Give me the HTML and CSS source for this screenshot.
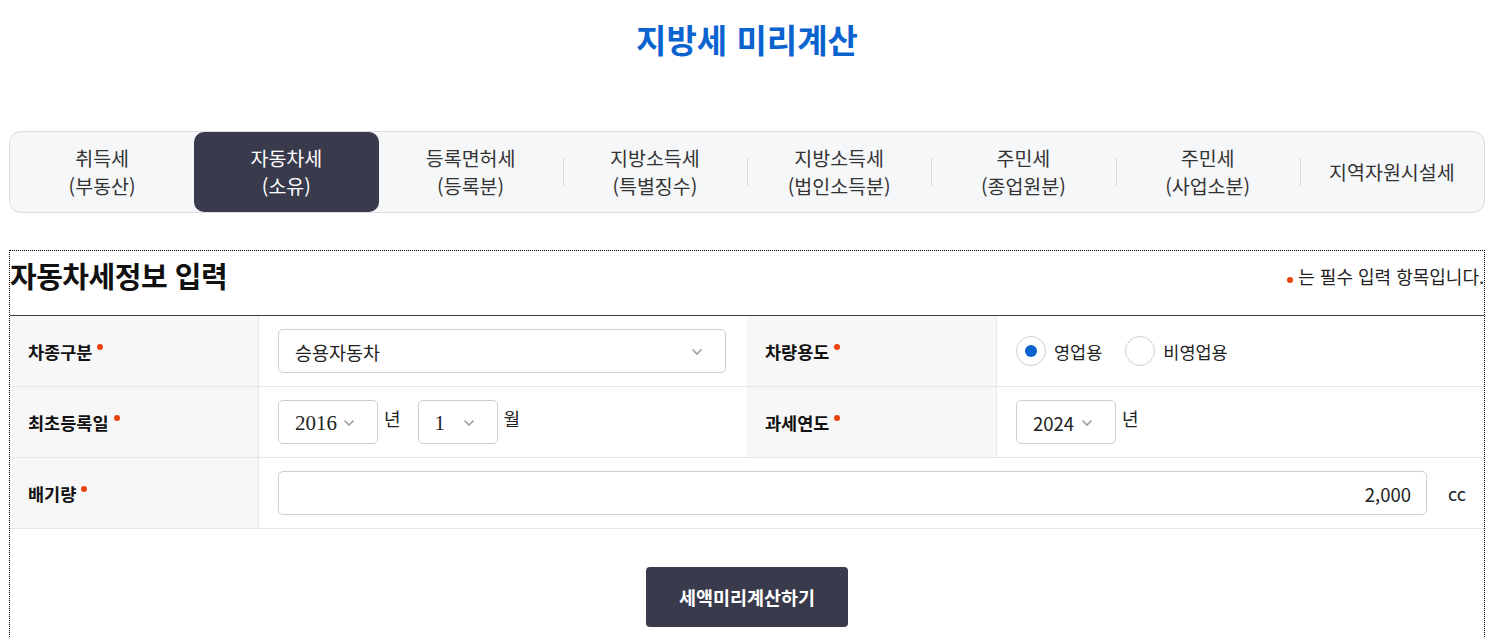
FILE: index.html
```html
<!DOCTYPE html>
<html lang="ko">
<head>
    <meta charset="UTF-8">
    <title>지방세 미리계산</title>
    <link rel="stylesheet" href="styles.css">
</head>
<body>
<div class="wrap">
    <h1 class="page-title">지방세 미리계산</h1>

    <div class="tabs">
        <div class="tab">취득세<br>(부동산)</div>
        <div class="tab active-tab">자동차세<br>(소유)</div>
        <div class="tab">등록면허세<br>(등록분)</div>
        <div class="tab sep">지방소득세<br>(특별징수)</div>
        <div class="tab sep">지방소득세<br>(법인소득분)</div>
        <div class="tab sep">주민세<br>(종업원분)</div>
        <div class="tab sep">주민세<br>(사업소분)</div>
        <div class="tab sep">지역자원시설세</div>
    </div>

    <div class="calc">
        <div class="calc-head">
            <h2>자동차세정보 입력</h2>
            <p class="req-note"><span class="dot"></span>는 필수 입력 항목입니다.</p>
        </div>

        <div class="form-grid">
            <div class="lbl">차종구분<span class="dot"></span></div>
            <div class="val">
                <div class="select wide">승용자동차
                    <svg class="chev" width="12" height="8" viewBox="0 0 12 8"><polyline points="1.5,1.5 6,6 10.5,1.5" fill="none" stroke="#a0a0a0" stroke-width="1.6"/></svg>
                </div>
            </div>
            <div class="lbl">차량용도<span class="dot"></span></div>
            <div class="val">
                <label class="radio"><span class="circle on"></span>영업용</label>
                <label class="radio"><span class="circle"></span>비영업용</label>
            </div>

            <div class="lbl">최초등록일<span class="dot"></span></div>
            <div class="val">
                <div class="select year serif">2016
                    <svg class="chev" width="12" height="8" viewBox="0 0 12 8"><polyline points="1.5,1.5 6,6 10.5,1.5" fill="none" stroke="#a0a0a0" stroke-width="1.6"/></svg>
                </div>
                <span class="unit">년</span>
                <div class="select month serif">1
                    <svg class="chev" width="12" height="8" viewBox="0 0 12 8"><polyline points="1.5,1.5 6,6 10.5,1.5" fill="none" stroke="#a0a0a0" stroke-width="1.6"/></svg>
                </div>
                <span class="unit">월</span>
            </div>
            <div class="lbl">과세연도<span class="dot"></span></div>
            <div class="val">
                <div class="select year">2024
                    <svg class="chev" width="12" height="8" viewBox="0 0 12 8"><polyline points="1.5,1.5 6,6 10.5,1.5" fill="none" stroke="#a0a0a0" stroke-width="1.6"/></svg>
                </div>
                <span class="unit">년</span>
            </div>

            <div class="lbl">배기량<span class="dot"></span></div>
            <div class="val span3">
                <div class="text-input">2,000</div>
                <span class="unit cc">cc</span>
            </div>
        </div>

        <div class="btn-area">
            <button class="btn-calc">세액미리계산하기</button>
        </div>
    </div>
</div>
</body>
</html>
```

FILE: styles.css
```css
body {
    margin: 0;
    font-family: "Noto Sans CJK KR", "Noto Sans", sans-serif;
    color: #222;
    background: #fff;
}

.wrap {
    width: 1476px;
    margin-left: 9px;
}

.page-title {
    margin: 0;
    padding-top: 16px;
    height: 131px;
    box-sizing: border-box;
    text-align: center;
    font-size: 33px;
    font-weight: 700;
    color: #0b63d0;
    line-height: 46px;
}

.tabs {
    display: flex;
    height: 82px;
    box-sizing: border-box;
    border: 1px solid #dcdde0;
    border-radius: 12px;
    background-color: #f6f7f9;
}

.tab {
    position: relative;
    flex: 1;
    display: flex;
    align-items: center;
    justify-content: center;
    text-align: center;
    font-size: 19.5px;
    line-height: 28px;
    color: #333;
    cursor: pointer;
}

.tab.sep::before {
    content: "";
    position: absolute;
    left: 0;
    top: 26px;
    height: 28px;
    border-left: 1px solid #d6d7da;
}

.active-tab {
    background-color: #393a4b;
    color: #fff;
    border-radius: 10px;
}

.calc {
    margin-top: 37px;
    border: 1px dotted #000;
    border-bottom: none;
    height: 400px;
}

.calc-head {
    display: flex;
    justify-content: space-between;
    align-items: center;
    height: 64px;
    border-bottom: 1px solid #3a3a48;
}

.calc-head h2 {
    margin: 0 0 16px 0;
    font-size: 29px;
    font-weight: 700;
    color: #111;
    letter-spacing: -0.5px;
}

.req-note {
    margin: 0 0 14px 0;
    font-size: 18px;
    color: #222;
}

.dot {
    display: inline-block;
    width: 6px;
    height: 6px;
    border-radius: 50%;
    background-color: #e8420e;
}

.req-note .dot {
    margin: 0 5px 0 0;
    vertical-align: 1px;
}

.form-grid {
    display: grid;
    grid-template-columns: 249px 488px 250px 1fr;
    grid-auto-rows: 71px;
}

.lbl,
.val {
    display: flex;
    align-items: center;
    border-bottom: 1px solid #e6e6e6;
}

.lbl {
    background-color: #f7f7f7;
    padding-left: 18px;
    font-size: 17.5px;
    font-weight: 700;
    color: #111;
    border-right: 1px solid #e6e6e6;
}

.lbl .dot {
    margin-left: 5px;
    position: relative;
    top: -4px;
}

.val {
    padding-left: 19px;
    padding-right: 18px;
}

.span3 {
    grid-column: span 3;
}

.select {
    display: flex;
    align-items: center;
    justify-content: space-between;
    height: 44px;
    box-sizing: border-box;
    border: 1px solid #cfcfcf;
    border-radius: 5px;
    background: #fff;
    padding: 2px 22px 0 16px;
    font-size: 18.5px;
    color: #222;
}

.select.wide {
    width: 448px;
}

.select.year {
    width: 100px;
    padding-right: 22px;
}

.select.month {
    width: 80px;
    padding-right: 22px;
}

.serif {
    font-family: "Liberation Serif", serif;
    font-size: 21px;
}

.chev {
    display: block;
}

.unit {
    margin: 0 17px 8px 6px;
    font-size: 18px;
    color: #222;
}

.radio {
    display: flex;
    align-items: center;
    margin-right: 23px;
    font-size: 17.5px;
    color: #222;
}

.radio .circle {
    width: 30px;
    height: 30px;
    box-sizing: border-box;
    border: 1px solid #cfcfcf;
    border-radius: 50%;
    margin-right: 8px;
    display: flex;
    align-items: center;
    justify-content: center;
}

.circle.on::after {
    content: "";
    width: 12px;
    height: 12px;
    border-radius: 50%;
    background-color: #0b63d0;
}

.text-input {
    flex: 1;
    height: 44px;
    box-sizing: border-box;
    border: 1px solid #cfcfcf;
    border-radius: 5px;
    display: flex;
    align-items: center;
    justify-content: flex-end;
    padding: 2px 15px 0 0;
    font-size: 18.5px;
}

.unit.cc {
    margin: 0 0 0 21px;
    font-size: 18px;
}

.btn-area {
    display: flex;
    justify-content: center;
    padding-top: 38px;
}

.btn-calc {
    width: 202px;
    height: 60px;
    border: none;
    border-radius: 4px;
    background-color: #393a4b;
    color: #fff;
    font-family: "Noto Sans CJK KR", sans-serif;
    font-size: 18.5px;
    font-weight: 700;
}
```
